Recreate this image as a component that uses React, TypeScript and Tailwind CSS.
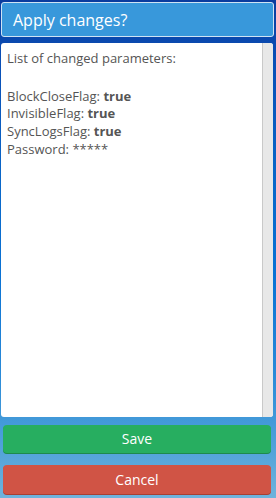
import React from "react";

export default function App() {
  return (
    <div
      className="w-[276px] h-[498px] flex flex-col overflow-hidden bg-[linear-gradient(180deg,#0a3c9e_0%,#0a4fb6_12%,#0a66c8_35%,#0a72d4_55%,#2a8ad8_75%,#4b9fd9_88%,#6fb3dc_100%)]"
      style={{ fontFamily: '"Open Sans", "Noto Sans", sans-serif' }}
    >
      <div className="mt-[2px] ml-[1px] mr-[2px] h-[35px] flex items-center rounded-[3px] border border-[#cfe3f4] bg-[#3898db] pl-[11px]">
        <span className="text-white text-[16px] leading-none">Apply changes?</span>
      </div>
      <div className="mt-[6px] ml-[1px] mr-[3px] h-[374px] flex rounded-[3px] bg-white overflow-hidden">
        <div className="flex-1 pl-[6px] pt-[7px] text-[13px] leading-[17.7px] text-[#555]">
          <div>List of changed parameters:</div>
          <div className="h-[20px]" />
          <div>
            BlockCloseFlag: <b className="font-bold">true</b>
          </div>
          <div>
            InvisibleFlag: <b className="font-bold">true</b>
          </div>
          <div>
            SyncLogsFlag: <b className="font-bold">true</b>
          </div>
          <div>Password: *****</div>
        </div>
        <div className="w-[11px] h-full bg-[#e8e8e8] border-l border-[#c9c9c9]" />
      </div>
      <button className="mt-[8px] ml-[3px] mr-[5px] h-[28px] rounded-[4px] bg-[#27ae60] shadow-[0_1px_0_#1e8a4c] text-white text-[14px] leading-none flex items-center justify-center">
        Save
      </button>
      <button className="mt-[12px] ml-[3px] mr-[5px] h-[29px] rounded-[4px] bg-[#d05445] shadow-[0_1px_0_#a83e32] text-white text-[14px] leading-none flex items-center justify-center">
        Cancel
      </button>
    </div>
  );
}
